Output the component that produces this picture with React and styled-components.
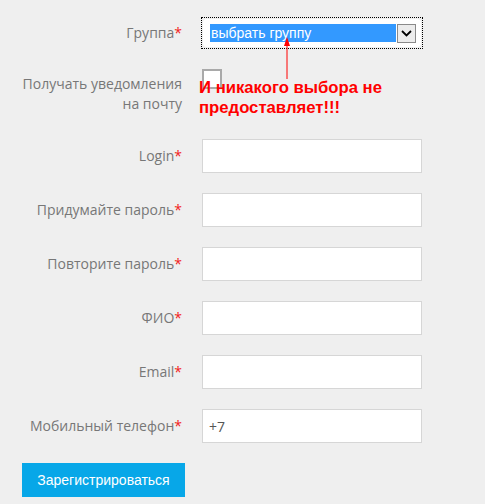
import styled, { createGlobalStyle } from "styled-components";

const GlobalStyle = createGlobalStyle`
    body {
        margin: 0;
        background: #efefef;
        font-family: "Open Sans", "Noto Sans", sans-serif;
    }
`;

const Form = styled.div`
    position: relative;
    display: flex;
    flex-direction: column;
    gap: 20px;
    padding-top: 17px;
    padding-bottom: 7px;
`;

const Row = styled.div`
    display: grid;
    grid-template-columns: 182px 220px;
    column-gap: 20px;
    align-items: ${(p) => (p.$top ? "start" : "center")};
    min-height: ${(p) => p.$minHeight || 0}px;
`;

const Label = styled.div`
    text-align: right;
    white-space: nowrap;
    color: #777;
    font-size: 14px;
    line-height: 20px;
    padding-top: ${(p) => p.$offset || 0}px;
`;

const Star = styled.span`
    color: #f21c1c;
`;

const Input = styled.div`
    box-sizing: border-box;
    height: 34px;
    background: #fff;
    border: 1px solid #d6d6d6;
    padding: 0 6px;
    display: flex;
    align-items: center;
    color: #555;
    font-size: 14px;
`;

const SelectBox = styled.div`
    box-sizing: border-box;
    width: 222px;
    height: 32px;
    margin-left: -1px;
    border: 1px dotted #000;
    padding: 1px;
`;

const SelectInner = styled.div`
    box-sizing: border-box;
    height: 100%;
    background: #fff;
    border-radius: 4px;
    display: flex;
    align-items: flex-start;
    gap: 1px;
    padding: 5px 5px 0 7px;
`;

const Selected = styled.div`
    flex: 1;
    height: 18px;
    background: #3399ff;
    color: #fff;
    font-family: "Liberation Sans", Arial, sans-serif;
    font-size: 14px;
    line-height: 18px;
    padding-left: 1px;
`;

const DropButton = styled.div`
    box-sizing: border-box;
    width: 19px;
    height: 19px;
    background: #ececec;
    border: 1px solid #8a8a8a;
    display: flex;
    align-items: center;
    justify-content: center;
`;

const Checkbox = styled.div`
    box-sizing: border-box;
    width: 20px;
    height: 20px;
    background: #fff;
    border: 2px solid #a9a9a9;
`;

const Button = styled.button`
    margin-left: 22px;
    width: 163px;
    height: 34px;
    border: none;
    background: #07a7e8;
    color: #fff;
    font-family: "Liberation Sans", Arial, sans-serif;
    font-size: 14px;
    padding: 0;
`;

const Note = styled.div`
    position: absolute;
    left: 199px;
    top: 78px;
    color: #ff0000;
    font-family: "Liberation Sans", Arial, sans-serif;
    font-weight: bold;
    font-size: 16.7px;
    line-height: 20px;
`;

const Arrow = styled.svg`
    position: absolute;
    left: 283px;
    top: 37px;
`;

const fields = [
    { label: "Login" },
    { label: "Придумайте пароль" },
    { label: "Повторите пароль" },
    { label: "ФИО" },
    { label: "Email" },
    { label: "Мобильный телефон", value: "+7" },
];

export default function App() {
    return (
        <>
            <GlobalStyle />
            <Form>
                <Row>
                    <Label>Группа<Star>*</Star></Label>
                    <SelectBox>
                        <SelectInner>
                            <Selected>выбрать группу</Selected>
                            <DropButton>
                                <svg width="11" height="7" viewBox="0 0 11 7">
                                    <path d="M1 1 L5.5 5.5 L10 1" fill="none" stroke="#000" strokeWidth="1.8" />
                                </svg>
                            </DropButton>
                        </SelectInner>
                    </SelectBox>
                </Row>
                <Row $top $minHeight={50}>
                    <Label $offset={5}>Получать уведомления<br />на почту</Label>
                    <Checkbox />
                </Row>
                {fields.map((field) => (
                    <Row key={field.label}>
                        <Label>{field.label}<Star>*</Star></Label>
                        <Input>{field.value}</Input>
                    </Row>
                ))}
                <Button>Зарегистрироваться</Button>
                <Arrow width="8" height="42" viewBox="0 0 8 42">
                    <polygon points="4,0 1,9 7,9" fill="#ff0000" />
                    <line x1="4" y1="8" x2="4" y2="42" stroke="#ff0000" strokeWidth="1" />
                </Arrow>
                <Note>И никакого выбора не<br />предоставляет!!!</Note>
            </Form>
        </>
    );
}
